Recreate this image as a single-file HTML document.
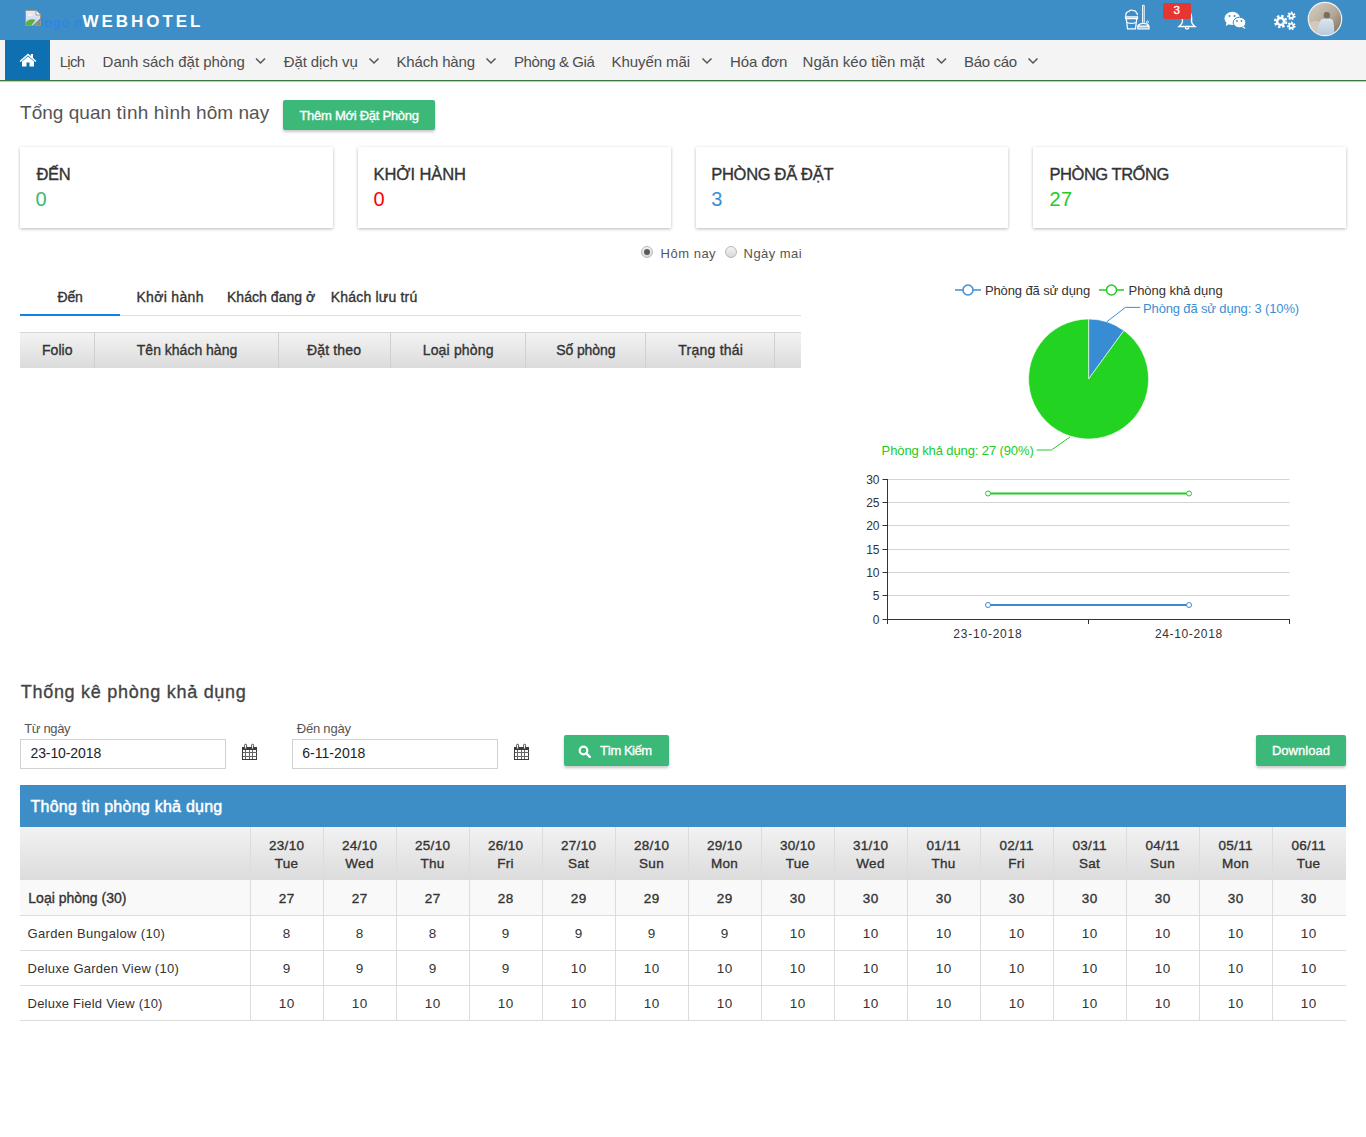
<!DOCTYPE html>
<html><head><meta charset="utf-8"><title>WebHotel</title>
<style>
html,body{margin:0;padding:0;background:#fff;}
body{width:1366px;height:1137px;overflow:hidden;position:relative;font-family:"Liberation Sans",sans-serif;}
.a{position:absolute;}
.t{position:absolute;white-space:nowrap;line-height:1;font-family:"Liberation Sans",sans-serif;}
.c{position:absolute;text-align:center;font-size:13px;line-height:18px;color:#333;white-space:nowrap;font-family:"Liberation Sans",sans-serif;}
.hd{-webkit-text-stroke:.35px #333;font-size:13.5px;letter-spacing:.4px;text-indent:.4px}
.c{font-size:13.5px;letter-spacing:.3px;text-indent:.3px}
.sb{-webkit-text-stroke:.35px #333;}
.card{position:absolute;top:147px;height:81px;background:#fff;box-shadow:0 1px 3px rgba(0,0,0,.28);}
.btn{position:absolute;background:#3cb878;border-radius:2px;box-shadow:0 2px 3px rgba(0,0,0,.22);}
.inp{position:absolute;top:739px;height:28px;width:204px;border:1px solid #d2d2d2;background:#fff;}
</style></head><body>
<!-- header -->
<div class="a" style="left:0;top:0;width:1366px;height:40px;background:#3d8ec6"></div>
<svg class="a" style="left:25px;top:10px" width="17" height="17" viewBox="0 0 17 17">
 <defs><linearGradient id="sky" x1="0" y1="0" x2="0" y2="1"><stop offset="0" stop-color="#e6ebf8"/><stop offset="1" stop-color="#c9d4ef"/></linearGradient></defs>
 <path d="M.5 .5h10.5l4.5 4.5v3.5L8 15.5H.5z" fill="url(#sky)" stroke="#a0968c" stroke-width="1"/>
 <path d="M11 .5v4.5h4.5" fill="#fff" stroke="#a0968c" stroke-width="1"/>
 <path d="M1 15V12.5c2-3 6-4 9.5-2.5L6.5 15z" fill="#5bb042"/>
 <path d="M10 15.5l5.5-5V15.5z" fill="#5bb042" stroke="#a0968c" stroke-width="1"/>
 <path d="M3 5.3c.3-1.2 1.8-1.5 2.5-.7.8-.4 1.8.1 1.8.9H3z" fill="#fff"/>
</svg>
<!-- right icons -->
<svg class="a" style="left:1120px;top:0px" width="32" height="32" viewBox="0 0 32 32" fill="none" stroke="#fff" stroke-width="1.2">
 <path d="M6 16.5c-.8-2.5.5-4.8 2.8-5 .8-1.6 3.2-2 4.5-.8 1.5-.4 2.8.6 3 2 1 .3 1.3 1.5.8 2.4" />
 <path d="M5.5 16.8h12v1.8h-12z" fill="#fff" fill-opacity=".35"/>
 <path d="M6.3 18.6l1.2 10.2h8l1.2-10.2"/>
 <path d="M7 22.5c3 1.3 6 1.3 9 0"/>
 <path d="M22.6 5.3v17.5M24.2 5.3v17.5M22.6 5.3h1.6" stroke-width="1"/>
 <path d="M17.8 26c1.2-1.8 3.2-2.6 5.6-2.6s4.4.8 5.6 2.6z"/>
 <path d="M17.8 26.8h11.2v2h-11.2z"/>
 <path d="M27.5 20.5l.5 1 1 .5-1 .5-.5 1-.5-1-1-.5 1-.5z" stroke-width=".7"/>
</svg>
<svg class="a" style="left:1177px;top:10px" width="20" height="21" viewBox="0 0 20 21" fill="none" stroke="#fff" stroke-width="1.4">
 <path d="M10 2c-3 0-4.6 2.3-4.6 5.5v4.3c0 1.3-1.2 2.8-3.4 4.7h16c-2.2-1.9-3.4-3.4-3.4-4.7V7.5C14.6 4.3 13 2 10 2z"/>
 <path d="M8.3 17.3a1.7 1.7 0 0 0 3.4 0"/>
</svg>
<div class="a" style="left:1163px;top:3px;width:28px;height:16px;background:#e53632;border-radius:2px"></div>
<div class="t" style="left:1173.5px;top:5px;font-size:11.5px;-webkit-text-stroke:.35px #fff;color:#fff">3</div>
<svg class="a" style="left:1224px;top:11px" width="24" height="19" viewBox="0 0 24 19">
 <ellipse cx="8.3" cy="7.3" rx="7.8" ry="6.6" fill="#fff"/>
 <path d="M2.5 11.5l-.8 3.5 3.8-2z" fill="#fff"/>
 <ellipse cx="15.5" cy="11.5" rx="6.3" ry="5.3" fill="#fff" stroke="#3d8ec6" stroke-width="1"/>
 <path d="M20 15l1.5 3-3.5-1.8z" fill="#fff"/>
 <circle cx="5.5" cy="5" r="1" fill="#3d8ec6"/><circle cx="10.5" cy="5" r="1" fill="#3d8ec6"/>
 <circle cx="13" cy="10" r=".9" fill="#3d8ec6"/><circle cx="17.5" cy="10" r=".9" fill="#3d8ec6"/>
</svg>
<svg class="a" style="left:1272px;top:10px" width="25" height="22" viewBox="0 0 25 22"><circle cx="8.6" cy="11.5" r="4.7" fill="#fff"/><circle cx="8.6" cy="11.5" r="5.45" fill="none" stroke="#fff" stroke-width="2.50" stroke-dasharray="2.354 1.926"/><circle cx="8.6" cy="11.5" r="2.2" fill="#3d8ec6"/><circle cx="19.3" cy="5.9" r="3.0" fill="#fff"/><circle cx="19.3" cy="5.9" r="3.40" fill="none" stroke="#fff" stroke-width="1.80" stroke-dasharray="1.679 1.373"/><circle cx="19.3" cy="5.9" r="1.3" fill="#3d8ec6"/><circle cx="19.3" cy="15.9" r="3.0" fill="#fff"/><circle cx="19.3" cy="15.9" r="3.40" fill="none" stroke="#fff" stroke-width="1.80" stroke-dasharray="1.679 1.373"/><circle cx="19.3" cy="15.9" r="1.3" fill="#3d8ec6"/></svg>
<svg class="a" style="left:1307px;top:1px" width="36" height="36" viewBox="0 0 36 36">
 <defs>
  <clipPath id="av"><circle cx="18" cy="18" r="16.5"/></clipPath>
  <linearGradient id="avbg" x1="0" y1="0" x2="1" y2="1"><stop offset="0" stop-color="#ddd5c8"/><stop offset=".55" stop-color="#b3a898"/><stop offset="1" stop-color="#6f6350"/></linearGradient>
  <linearGradient id="shirt" x1="0" y1="0" x2="0" y2="1"><stop offset="0" stop-color="#dbe6ef"/><stop offset="1" stop-color="#b4c5d8"/></linearGradient>
 </defs>
 <g clip-path="url(#av)">
  <rect width="36" height="36" fill="url(#avbg)"/>
  <ellipse cx="9" cy="27" rx="9" ry="7" fill="#d9d0bf" opacity=".8"/>
  <ellipse cx="19.8" cy="14.5" rx="3.2" ry="3.4" fill="#7b6b5a"/>
  <path d="M14 18.5c2-1.5 9-1.5 11.5 0 1.5 3 1.8 10 1.8 18H9.5c.5-8 2.5-15 4.5-18z" fill="url(#shirt)"/>
 </g>
 <circle cx="18" cy="18" r="16.7" fill="none" stroke="#f2f2f2" stroke-width="1.2"/>
</svg>
<!-- nav -->
<div class="a" style="left:0;top:40px;width:1366px;height:40px;background:#f4f4f4"></div>
<div class="a" style="left:0;top:80px;width:1366px;height:1px;background:#3a7a3a"></div>
<div class="a" style="left:0;top:81px;width:1366px;height:1px;background:#c9c5c9"></div>
<div class="a" style="left:5px;top:40px;width:45px;height:40px;background:#0e70b0"></div>
<svg class="a" style="left:19px;top:53px" width="18" height="14" viewBox="0 0 18 14">
 <path d="M9 .6L.6 8l1.1 1.1L9 2.6l7.3 6.5L17.4 8 14 5V1h-2.2v2.1z" fill="#fff"/>
 <path d="M3 8.5L9 3.5l6 5V13.5h-4.5v-4h-3v4H3z" fill="#fff"/>
</svg>
<svg class="a" style="left:250px;top:55px" width="800" height="12" fill="none" stroke="#555" stroke-width="1.5">
 <path d="M6 3.5l4.5 4.5 4.5-4.5"/>
 <path d="M119.5 3.5l4.5 4.5 4.5-4.5"/>
 <path d="M236.5 3.5l4.5 4.5 4.5-4.5"/>
 <path d="M452.5 3.5l4.5 4.5 4.5-4.5"/>
 <path d="M687 3.5l4.5 4.5 4.5-4.5"/>
 <path d="M778.5 3.5l4.5 4.5 4.5-4.5"/>
</svg>
<!-- overview -->
<div class="btn" style="left:283px;top:100px;width:152px;height:30px"></div>
<div class="card" style="left:20px;width:313px"></div>
<div class="card" style="left:358px;width:313px"></div>
<div class="card" style="left:696px;width:312px"></div>
<div class="card" style="left:1033px;width:313px"></div>
<!-- radios -->
<div class="a" style="left:641px;top:246px;width:10px;height:10px;border-radius:50%;border:1px solid #b8b8b8;background:linear-gradient(#f4f4f4,#d8d8d8)"></div>
<div class="a" style="left:644px;top:249px;width:6px;height:6px;border-radius:50%;background:#5a5a5a"></div>
<div class="a" style="left:725px;top:246px;width:10px;height:10px;border-radius:50%;border:1px solid #b8b8b8;background:linear-gradient(#f4f4f4,#d8d8d8)"></div>
<!-- tabs -->
<div class="a" style="left:20px;top:315px;width:781px;height:1px;background:#dedede"></div>
<div class="a" style="left:20px;top:314px;width:100px;height:2px;background:#1083e8"></div>
<div class="a" style="left:20px;top:332px;width:781px;height:36px;border-top:1px solid #d5d5d5;box-sizing:border-box;background:linear-gradient(#f3f3f3,#dbdbdb)"></div>
<div class="a" style="left:94px;top:333px;width:1px;height:35px;background:#d0d0d0"></div>
<div class="a" style="left:278px;top:333px;width:1px;height:35px;background:#d0d0d0"></div>
<div class="a" style="left:390px;top:333px;width:1px;height:35px;background:#d0d0d0"></div>
<div class="a" style="left:525px;top:333px;width:1px;height:35px;background:#d0d0d0"></div>
<div class="a" style="left:645px;top:333px;width:1px;height:35px;background:#d0d0d0"></div>
<div class="a" style="left:774px;top:333px;width:1px;height:35px;background:#d0d0d0"></div>
<!-- pie chart -->
<svg class="a" style="left:840px;top:270px" width="500" height="390" viewBox="840 270 500 390">
 <g fill="none" stroke-width="1.5">
  <path d="M955 290h26" stroke="#3a8fd4"/><circle cx="968" cy="290" r="5" fill="#fff" stroke="#3a8fd4"/>
  <path d="M1099 290h25" stroke="#22cc22"/><circle cx="1111.5" cy="290" r="5" fill="#fff" stroke="#22cc22"/>
 </g>
 <path d="M1088.6 379L1088.6 319A60 60 0 0 1 1123.9 330.5z" fill="#388cd4" stroke="#fff" stroke-width=".6"/>
 <path d="M1088.6 379L1123.9 330.5A60 60 0 1 1 1088.6 319z" fill="#22d322" stroke="#fff" stroke-width=".6"/>
 <path d="M1107 321.6L1125.4 307.4H1140.3" fill="none" stroke="#3a8fd4" stroke-width="1"/>
 <path d="M1070 437L1051.4 450H1036.8" fill="none" stroke="#22cc22" stroke-width="1"/>
 <!-- line chart -->
 <g stroke="#d4d4d4" stroke-width="1">
  <path d="M888 479.5H1289.5M888 502.5H1289.5M888 525.5H1289.5M888 549.5H1289.5M888 572.5H1289.5M888 595.5H1289.5"/>
 </g>
 <g stroke="#333" stroke-width="1" fill="none">
  <path d="M887.5 479V620M882.5 479.5H887.5M882.5 502.5H887.5M882.5 525.5H887.5M882.5 549.5H887.5M882.5 572.5H887.5M882.5 595.5H887.5M882.5 619.5H887.5"/>
  <path d="M887.5 619.5H1289.5M887.5 619V624M1088.5 619V624M1289.5 619V624"/>
 </g>
 <path d="M988 493.5H1189" stroke="#22cc22" stroke-width="2"/>
 <path d="M988 605H1189" stroke="#3a8bd4" stroke-width="2"/>
 <g fill="#fff" stroke-width="1">
  <circle cx="988" cy="493.5" r="2.5" stroke="#22cc22"/><circle cx="1189" cy="493.5" r="2.5" stroke="#22cc22"/>
  <circle cx="988" cy="605" r="2.5" stroke="#3a8bd4"/><circle cx="1189" cy="605" r="2.5" stroke="#3a8bd4"/>
 </g>
 <g font-family="Liberation Sans" font-size="12" fill="#333" text-anchor="end">
  <text x="879.5" y="484">30</text><text x="879.5" y="507">25</text><text x="879.5" y="530">20</text>
  <text x="879.5" y="554">15</text><text x="879.5" y="577">10</text><text x="879.5" y="600">5</text><text x="879.5" y="624">0</text>
 </g>
</svg>
<!-- section 2 -->
<div class="inp" style="left:20px"></div>
<div class="inp" style="left:292px"></div>
<svg class="a" style="left:241px;top:743px" width="17" height="18" viewBox="0 0 17 18">
 <g shape-rendering="crispEdges">
 <path d="M1 4h15v3H1z" fill="#3a3a3a"/>
 <path d="M1.5 4.5h14v12h-14z" fill="none" stroke="#3a3a3a" stroke-width="1"/>
 <path d="M4.5 7v9M8.5 7v9M11.5 7v9M1.5 9.5h14M1.5 13.5h14" fill="none" stroke="#666" stroke-width="1"/>
 </g>
 <rect x="3.6" y="1.2" width="2" height="4.8" rx="1" fill="#fff" stroke="#3a3a3a" stroke-width=".9"/>
 <rect x="10.6" y="1.2" width="2" height="4.8" rx="1" fill="#fff" stroke="#3a3a3a" stroke-width=".9"/>
</svg>
<svg class="a" style="left:513px;top:743px" width="17" height="18" viewBox="0 0 17 18">
 <g shape-rendering="crispEdges">
 <path d="M1 4h15v3H1z" fill="#3a3a3a"/>
 <path d="M1.5 4.5h14v12h-14z" fill="none" stroke="#3a3a3a" stroke-width="1"/>
 <path d="M4.5 7v9M8.5 7v9M11.5 7v9M1.5 9.5h14M1.5 13.5h14" fill="none" stroke="#666" stroke-width="1"/>
 </g>
 <rect x="3.6" y="1.2" width="2" height="4.8" rx="1" fill="#fff" stroke="#3a3a3a" stroke-width=".9"/>
 <rect x="10.6" y="1.2" width="2" height="4.8" rx="1" fill="#fff" stroke="#3a3a3a" stroke-width=".9"/>
</svg>
<div class="btn" style="left:564px;top:735px;width:105px;height:31px"></div>
<svg class="a" style="left:578px;top:744.5px" width="14" height="13" viewBox="0 0 14 13" fill="none" stroke="#fff">
 <circle cx="5.5" cy="5.5" r="3.8" stroke-width="2.2"/><path d="M8.3 8.3l3.5 3.5" stroke-width="2.4" stroke-linecap="round"/>
</svg>
<div class="btn" style="left:1256px;top:735px;width:90px;height:31px"></div>
<div class="a" style="left:20px;top:785px;width:1326px;height:42px;background:#3d8ec6"></div>
<div style="position:absolute;left:20px;top:827px;width:1326px;height:53px;background:linear-gradient(#f2f2f2,#dcdcdc)"></div><div style="position:absolute;left:20px;top:880px;width:1326px;height:35px;background:#f9f9f9"></div><div style="position:absolute;left:20px;top:915px;width:1326px;height:1px;background:#dcdcdc"></div><div style="position:absolute;left:20px;top:950px;width:1326px;height:1px;background:#dcdcdc"></div><div style="position:absolute;left:20px;top:985px;width:1326px;height:1px;background:#dcdcdc"></div><div style="position:absolute;left:20px;top:1020px;width:1326px;height:1px;background:#dcdcdc"></div><div style="position:absolute;left:250.00px;top:827px;width:1px;height:193px;background:#dcdcdc"></div><div style="position:absolute;left:323.00px;top:827px;width:1px;height:193px;background:#dcdcdc"></div><div style="position:absolute;left:396.00px;top:827px;width:1px;height:193px;background:#dcdcdc"></div><div style="position:absolute;left:469.00px;top:827px;width:1px;height:193px;background:#dcdcdc"></div><div style="position:absolute;left:542.00px;top:827px;width:1px;height:193px;background:#dcdcdc"></div><div style="position:absolute;left:615.00px;top:827px;width:1px;height:193px;background:#dcdcdc"></div><div style="position:absolute;left:688.00px;top:827px;width:1px;height:193px;background:#dcdcdc"></div><div style="position:absolute;left:761.00px;top:827px;width:1px;height:193px;background:#dcdcdc"></div><div style="position:absolute;left:834.00px;top:827px;width:1px;height:193px;background:#dcdcdc"></div><div style="position:absolute;left:907.00px;top:827px;width:1px;height:193px;background:#dcdcdc"></div><div style="position:absolute;left:980.00px;top:827px;width:1px;height:193px;background:#dcdcdc"></div><div style="position:absolute;left:1053.00px;top:827px;width:1px;height:193px;background:#dcdcdc"></div><div style="position:absolute;left:1126.00px;top:827px;width:1px;height:193px;background:#dcdcdc"></div><div style="position:absolute;left:1199.00px;top:827px;width:1px;height:193px;background:#dcdcdc"></div><div style="position:absolute;left:1272.00px;top:827px;width:1px;height:193px;background:#dcdcdc"></div><div class="c hd" style="left:250.00px;top:837px;width:73.00px">23/10<br>Tue</div><div class="c sb" style="left:250.00px;top:890.2px;width:73.00px">27</div><div class="c " style="left:250.00px;top:925.2px;width:73.00px">8</div><div class="c " style="left:250.00px;top:960.2px;width:73.00px">9</div><div class="c " style="left:250.00px;top:995.2px;width:73.00px">10</div><div class="c hd" style="left:323.00px;top:837px;width:73.00px">24/10<br>Wed</div><div class="c sb" style="left:323.00px;top:890.2px;width:73.00px">27</div><div class="c " style="left:323.00px;top:925.2px;width:73.00px">8</div><div class="c " style="left:323.00px;top:960.2px;width:73.00px">9</div><div class="c " style="left:323.00px;top:995.2px;width:73.00px">10</div><div class="c hd" style="left:396.00px;top:837px;width:73.00px">25/10<br>Thu</div><div class="c sb" style="left:396.00px;top:890.2px;width:73.00px">27</div><div class="c " style="left:396.00px;top:925.2px;width:73.00px">8</div><div class="c " style="left:396.00px;top:960.2px;width:73.00px">9</div><div class="c " style="left:396.00px;top:995.2px;width:73.00px">10</div><div class="c hd" style="left:469.00px;top:837px;width:73.00px">26/10<br>Fri</div><div class="c sb" style="left:469.00px;top:890.2px;width:73.00px">28</div><div class="c " style="left:469.00px;top:925.2px;width:73.00px">9</div><div class="c " style="left:469.00px;top:960.2px;width:73.00px">9</div><div class="c " style="left:469.00px;top:995.2px;width:73.00px">10</div><div class="c hd" style="left:542.00px;top:837px;width:73.00px">27/10<br>Sat</div><div class="c sb" style="left:542.00px;top:890.2px;width:73.00px">29</div><div class="c " style="left:542.00px;top:925.2px;width:73.00px">9</div><div class="c " style="left:542.00px;top:960.2px;width:73.00px">10</div><div class="c " style="left:542.00px;top:995.2px;width:73.00px">10</div><div class="c hd" style="left:615.00px;top:837px;width:73.00px">28/10<br>Sun</div><div class="c sb" style="left:615.00px;top:890.2px;width:73.00px">29</div><div class="c " style="left:615.00px;top:925.2px;width:73.00px">9</div><div class="c " style="left:615.00px;top:960.2px;width:73.00px">10</div><div class="c " style="left:615.00px;top:995.2px;width:73.00px">10</div><div class="c hd" style="left:688.00px;top:837px;width:73.00px">29/10<br>Mon</div><div class="c sb" style="left:688.00px;top:890.2px;width:73.00px">29</div><div class="c " style="left:688.00px;top:925.2px;width:73.00px">9</div><div class="c " style="left:688.00px;top:960.2px;width:73.00px">10</div><div class="c " style="left:688.00px;top:995.2px;width:73.00px">10</div><div class="c hd" style="left:761.00px;top:837px;width:73.00px">30/10<br>Tue</div><div class="c sb" style="left:761.00px;top:890.2px;width:73.00px">30</div><div class="c " style="left:761.00px;top:925.2px;width:73.00px">10</div><div class="c " style="left:761.00px;top:960.2px;width:73.00px">10</div><div class="c " style="left:761.00px;top:995.2px;width:73.00px">10</div><div class="c hd" style="left:834.00px;top:837px;width:73.00px">31/10<br>Wed</div><div class="c sb" style="left:834.00px;top:890.2px;width:73.00px">30</div><div class="c " style="left:834.00px;top:925.2px;width:73.00px">10</div><div class="c " style="left:834.00px;top:960.2px;width:73.00px">10</div><div class="c " style="left:834.00px;top:995.2px;width:73.00px">10</div><div class="c hd" style="left:907.00px;top:837px;width:73.00px">01/11<br>Thu</div><div class="c sb" style="left:907.00px;top:890.2px;width:73.00px">30</div><div class="c " style="left:907.00px;top:925.2px;width:73.00px">10</div><div class="c " style="left:907.00px;top:960.2px;width:73.00px">10</div><div class="c " style="left:907.00px;top:995.2px;width:73.00px">10</div><div class="c hd" style="left:980.00px;top:837px;width:73.00px">02/11<br>Fri</div><div class="c sb" style="left:980.00px;top:890.2px;width:73.00px">30</div><div class="c " style="left:980.00px;top:925.2px;width:73.00px">10</div><div class="c " style="left:980.00px;top:960.2px;width:73.00px">10</div><div class="c " style="left:980.00px;top:995.2px;width:73.00px">10</div><div class="c hd" style="left:1053.00px;top:837px;width:73.00px">03/11<br>Sat</div><div class="c sb" style="left:1053.00px;top:890.2px;width:73.00px">30</div><div class="c " style="left:1053.00px;top:925.2px;width:73.00px">10</div><div class="c " style="left:1053.00px;top:960.2px;width:73.00px">10</div><div class="c " style="left:1053.00px;top:995.2px;width:73.00px">10</div><div class="c hd" style="left:1126.00px;top:837px;width:73.00px">04/11<br>Sun</div><div class="c sb" style="left:1126.00px;top:890.2px;width:73.00px">30</div><div class="c " style="left:1126.00px;top:925.2px;width:73.00px">10</div><div class="c " style="left:1126.00px;top:960.2px;width:73.00px">10</div><div class="c " style="left:1126.00px;top:995.2px;width:73.00px">10</div><div class="c hd" style="left:1199.00px;top:837px;width:73.00px">05/11<br>Mon</div><div class="c sb" style="left:1199.00px;top:890.2px;width:73.00px">30</div><div class="c " style="left:1199.00px;top:925.2px;width:73.00px">10</div><div class="c " style="left:1199.00px;top:960.2px;width:73.00px">10</div><div class="c " style="left:1199.00px;top:995.2px;width:73.00px">10</div><div class="c hd" style="left:1272.00px;top:837px;width:73.00px">06/11<br>Tue</div><div class="c sb" style="left:1272.00px;top:890.2px;width:73.00px">30</div><div class="c " style="left:1272.00px;top:925.2px;width:73.00px">10</div><div class="c " style="left:1272.00px;top:960.2px;width:73.00px">10</div><div class="c " style="left:1272.00px;top:995.2px;width:73.00px">10</div>
<div class="t" style="left:40.5px;top:15.7px;font-size:13px;letter-spacing:1.2px;font-weight:400;color:#2a84e6;">logo m</div><div class="a" style="left:82px;top:12px;width:16px;height:20px;background:#3d8ec6"></div><div class="t" style="left:82.6px;top:13px;font-size:17px;letter-spacing:2.929px;font-weight:700;color:#fff;">WEBHOTEL</div><div class="t" style="left:59.7px;top:54px;font-size:15px;letter-spacing:-0.733px;font-weight:400;color:#4d4d4d;">Lịch</div><div class="t" style="left:102.6px;top:54px;font-size:15px;letter-spacing:-0.022px;font-weight:400;color:#4d4d4d;">Danh sách đặt phòng</div><div class="t" style="left:283.7px;top:54px;font-size:15px;letter-spacing:-0.1px;font-weight:400;color:#4d4d4d;">Đặt dịch vụ</div><div class="t" style="left:396.5px;top:54px;font-size:15px;letter-spacing:-0.167px;font-weight:400;color:#4d4d4d;">Khách hàng</div><div class="t" style="left:514px;top:54px;font-size:15px;letter-spacing:-0.42px;font-weight:400;color:#4d4d4d;">Phòng &amp; Giá</div><div class="t" style="left:611.5px;top:54px;font-size:15px;letter-spacing:-0.078px;font-weight:400;color:#4d4d4d;">Khuyến mãi</div><div class="t" style="left:730px;top:54px;font-size:15px;letter-spacing:-0.133px;font-weight:400;color:#4d4d4d;">Hóa đơn</div><div class="t" style="left:802.6px;top:54px;font-size:15px;letter-spacing:0.024px;font-weight:400;color:#4d4d4d;">Ngăn kéo tiền mặt</div><div class="t" style="left:964px;top:54px;font-size:15px;letter-spacing:-0.316px;font-weight:400;color:#4d4d4d;">Báo cáo</div><div class="t" style="left:20px;top:103px;font-size:19px;letter-spacing:0.035px;font-weight:400;color:#555;">Tổng quan tình hình hôm nay</div><div class="t" style="left:299.4px;top:108.5px;font-size:13px;letter-spacing:-0.265px;font-weight:400;color:#fff;-webkit-text-stroke:0.35px #fff;">Thêm Mới Đặt Phòng</div><div class="t" style="left:36.4px;top:166px;font-size:16.5px;letter-spacing:-0.3px;font-weight:400;color:#333;-webkit-text-stroke:0.35px #333;">ĐẾN</div><div class="t" style="left:373.6px;top:166px;font-size:16.5px;letter-spacing:-0.075px;font-weight:400;color:#333;-webkit-text-stroke:0.35px #333;">KHỞI HÀNH</div><div class="t" style="left:711.3px;top:166px;font-size:16.5px;letter-spacing:-0.309px;font-weight:400;color:#333;-webkit-text-stroke:0.35px #333;">PHÒNG ĐÃ ĐẶT</div><div class="t" style="left:1049.5px;top:166px;font-size:16.5px;letter-spacing:-0.46px;font-weight:400;color:#333;-webkit-text-stroke:0.35px #333;">PHÒNG TRỐNG</div><div class="t" style="left:35.6px;top:188.7px;font-size:20px;letter-spacing:0.0px;font-weight:400;color:#3cb878;">0</div><div class="t" style="left:373.6px;top:188.7px;font-size:20px;letter-spacing:0.0px;font-weight:400;color:#f00;">0</div><div class="t" style="left:711.3px;top:188.7px;font-size:20px;letter-spacing:0.0px;font-weight:400;color:#3a8fd4;">3</div><div class="t" style="left:1049.5px;top:188.7px;font-size:20px;letter-spacing:0.3px;font-weight:400;color:#22cc22;">27</div><div class="t" style="left:660.6px;top:247.4px;font-size:13px;letter-spacing:0.5px;font-weight:400;color:#555;">Hôm nay</div><div class="t" style="left:743.6px;top:247.4px;font-size:13px;letter-spacing:0.443px;font-weight:400;color:#555;">Ngày mai</div><div class="t" style="left:57.4px;top:290.4px;font-size:14px;letter-spacing:-0.1px;font-weight:400;color:#333;-webkit-text-stroke:0.35px #333;">Đến</div><div class="t" style="left:136.4px;top:290.4px;font-size:14px;letter-spacing:0.325px;font-weight:400;color:#333;-webkit-text-stroke:0.35px #333;">Khởi hành</div><div class="t" style="left:227px;top:290.4px;font-size:14px;letter-spacing:0.037px;font-weight:400;color:#333;-webkit-text-stroke:0.35px #333;">Khách đang ở</div><div class="t" style="left:330.7px;top:290.4px;font-size:14px;letter-spacing:0.208px;font-weight:400;color:#333;-webkit-text-stroke:0.35px #333;">Khách lưu trú</div><div class="t" style="left:42px;top:343.3px;font-size:14px;letter-spacing:0.05px;font-weight:400;color:#333;-webkit-text-stroke:0.35px #333;">Folio</div><div class="t" style="left:136.8px;top:343.3px;font-size:14px;letter-spacing:0.0px;font-weight:400;color:#333;-webkit-text-stroke:0.35px #333;">Tên khách hàng</div><div class="t" style="left:306.9px;top:343.3px;font-size:14px;letter-spacing:0.171px;font-weight:400;color:#333;-webkit-text-stroke:0.35px #333;">Đặt theo</div><div class="t" style="left:422.7px;top:343.3px;font-size:14px;letter-spacing:0.167px;font-weight:400;color:#333;-webkit-text-stroke:0.35px #333;">Loại phòng</div><div class="t" style="left:556.2px;top:343.3px;font-size:14px;letter-spacing:-0.101px;font-weight:400;color:#333;-webkit-text-stroke:0.35px #333;">Số phòng</div><div class="t" style="left:678.3px;top:343.3px;font-size:14px;letter-spacing:0.234px;font-weight:400;color:#333;-webkit-text-stroke:0.35px #333;">Trạng thái</div><div class="t" style="left:984.9px;top:284.1px;font-size:13px;letter-spacing:-0.113px;font-weight:400;color:#333;">Phòng đã sử dụng</div><div class="t" style="left:1128.5px;top:284.1px;font-size:13px;letter-spacing:-0.045px;font-weight:400;color:#333;">Phòng khả dụng</div><div class="t" style="left:1143.1px;top:301.9px;font-size:13px;letter-spacing:-0.154px;font-weight:400;color:#3a8fd4;">Phòng đã sử dụng: 3 (10%)</div><div class="t" style="left:881.6px;top:443.8px;font-size:13px;letter-spacing:-0.109px;font-weight:400;color:#22cc22;">Phòng khả dụng: 27 (90%)</div><div class="t" style="left:953.3px;top:627.8px;font-size:12px;letter-spacing:0.778px;font-weight:400;color:#333;">23-10-2018</div><div class="t" style="left:1154.9px;top:627.8px;font-size:12px;letter-spacing:0.655px;font-weight:400;color:#333;">24-10-2018</div><div class="t" style="left:20.7px;top:682.5px;font-size:18px;letter-spacing:0.727px;font-weight:400;color:#444;-webkit-text-stroke:0.35px #444;">Thống kê phòng khả dụng</div><div class="t" style="left:24.3px;top:722.4px;font-size:13px;letter-spacing:-0.367px;font-weight:400;color:#555;">Từ ngày</div><div class="t" style="left:296.7px;top:722.4px;font-size:13px;letter-spacing:-0.199px;font-weight:400;color:#555;">Đến ngày</div><div class="t" style="left:30.5px;top:746px;font-size:14px;letter-spacing:-0.099px;font-weight:400;color:#222;">23-10-2018</div><div class="t" style="left:302.2px;top:746px;font-size:14px;letter-spacing:0.05px;font-weight:400;color:#222;">6-11-2018</div><div class="t" style="left:600px;top:744px;font-size:13px;letter-spacing:-0.515px;font-weight:400;color:#fff;-webkit-text-stroke:0.35px #fff;">Tìm Kiếm</div><div class="t" style="left:1271.9px;top:744px;font-size:13px;letter-spacing:0.028px;font-weight:400;color:#fff;-webkit-text-stroke:0.35px #fff;">Download</div><div class="t" style="left:30.5px;top:798.7px;font-size:16px;letter-spacing:0.253px;font-weight:400;color:#fff;-webkit-text-stroke:0.5px #fff;">Thông tin phòng khả dụng</div><div class="t" style="left:28.3px;top:891.2px;font-size:14px;letter-spacing:0.008px;font-weight:400;color:#333;-webkit-text-stroke:0.35px #333;">Loại phòng (30)</div><div class="t" style="left:27.6px;top:927.1px;font-size:13px;letter-spacing:0.342px;font-weight:400;color:#333;">Garden Bungalow (10)</div><div class="t" style="left:27.6px;top:962.1px;font-size:13px;letter-spacing:0.246px;font-weight:400;color:#333;">Deluxe Garden View (10)</div><div class="t" style="left:27.6px;top:997.1px;font-size:13px;letter-spacing:0.205px;font-weight:400;color:#333;">Deluxe Field View (10)</div>
</body></html>
